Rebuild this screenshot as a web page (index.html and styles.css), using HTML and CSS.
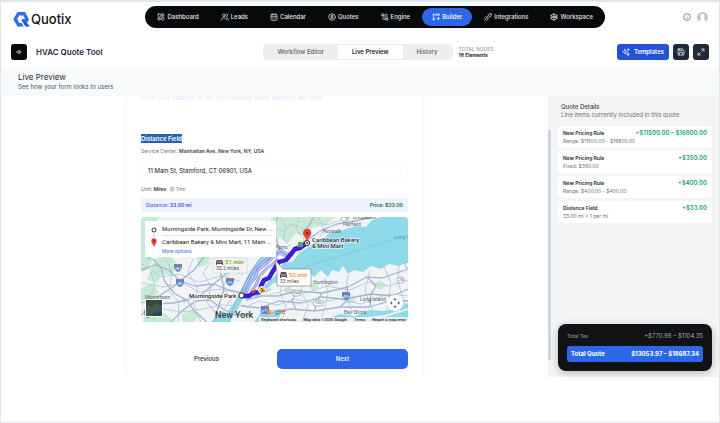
FILE: index.html
```html
<!DOCTYPE html>
<html lang="en">
  <head>
    <meta charset="UTF-8" />
    <meta name="viewport" content="width=device-width, initial-scale=1.0" />
    <title>Quotix - HVAC Quote Tool</title>
    <link rel="stylesheet" href="styles.css">
  </head>
  <body>
    <!-- header -->
    <header class="header">
      <a href="#" class="logo">
        <svg class="logo-mark" viewBox="0 0 17 15">
          <path d="M4.500 0H12L16 7.500L14 11L9.500 7H12.200L10.300 3.500H6.200L4.200 7.300L6.200 11H8.500L10.800 14.500H4.500L0.300 7.300Z" fill="#2f6bed" />
          <path d="M8 7.500H11L17 14.500H12.500Z" fill="#1f55d6" />
        </svg>
        <span>Quotix</span>
      </a>
      <nav class="nav">
        <a href="#" class="nav-item">
          <svg class="icon" viewBox="0 0 24 24"><rect x="3" y="3" width="7" height="9" rx="1" /><rect x="14" y="3" width="7" height="5" rx="1" /><rect x="14" y="12" width="7" height="9" rx="1" /><rect x="3" y="16" width="7" height="5" rx="1" /></svg>
          Dashboard
        </a>
        <a href="#" class="nav-item">
          <svg class="icon" viewBox="0 0 24 24"><circle cx="9" cy="7" r="4" /><path d="M2 21v-2a4 4 0 0 1 4-4h6a4 4 0 0 1 4 4v2M16 3a4 4 0 0 1 0 8M22 21v-2a4 4 0 0 0-3-4" /></svg>
          Leads
        </a>
        <a href="#" class="nav-item">
          <svg class="icon" viewBox="0 0 24 24"><rect x="3" y="4" width="18" height="18" rx="2" /><path d="M8 2v4M16 2v4M3 10h18M8 14h.1M12 14h.1M16 14h.1M8 18h.1M12 18h.1M16 18h.1" /></svg>
          Calendar
        </a>
        <a href="#" class="nav-item">
          <svg class="icon" viewBox="0 0 24 24"><circle cx="12" cy="12" r="10" /><path d="M16 8h-6a2 2 0 0 0 0 4h4a2 2 0 0 1 0 4H8M12 18V6" /></svg>
          Quotes
        </a>
        <a href="#" class="nav-item">
          <svg class="icon" viewBox="0 0 24 24"><path d="M3 3h6v5H3zM6 8v9a3 3 0 0 0 6 0V6a3 3 0 0 1 6 0v9M15 16h6v5h-6z" /></svg>
          Engine
        </a>
        <a href="#" class="nav-item active">
          <svg class="icon" viewBox="0 0 24 24"><circle cx="5" cy="19" r="3" /><circle cx="19" cy="5" r="3" /><path d="M5 16V3M2 6l3-3 3 3M16 5h-5M13 2l-3 3 3 3M19 13v8M15 17h8" /></svg>
          Builder
        </a>
        <a href="#" class="nav-item">
          <svg class="icon" viewBox="0 0 24 24"><path d="M6 21a3 3 0 0 0 4 0l3-3-7-7-3 3a3 3 0 0 0 0 4zM2 22l2-2M8 13l3-3M11 16l3-3M12 6l6 6 3-3a4 4 0 0 0-6-6zM19 5l3-3" /></svg>
          Integrations
        </a>
        <a href="#" class="nav-item">
          <svg class="icon" viewBox="0 0 24 24"><circle cx="12" cy="12" r="9" /><circle cx="12" cy="12" r="3" /><path d="M12 1v8M12 15v8M2 7l7 4M15 13l7 4M2 17l7-4M15 11l7-4" /></svg>
          Workspace
        </a>
      </nav>
      <div class="account">
        <svg class="info" viewBox="0 0 24 24"><circle cx="12" cy="12" r="10" /><path d="M12 11v6M12 7v1" /></svg>
        <svg class="avatar" viewBox="0 0 11 11"><circle cx="5.500" cy="5.500" r="5.500" fill="#c5c5c7" /><path d="M5.500 1.800C3.700 1.800 3.300 3.500 3.500 5C3.600 6.200 4.200 7 4.300 7.500C4.200 8.300 2.200 8.300 1.600 9.400Q5.500 13 9.400 9.400C8.800 8.300 6.800 8.300 6.700 7.500C6.800 7 7.400 6.200 7.500 5C7.700 3.500 7.300 1.800 5.500 1.800Z" fill="#fff" /></svg>
      </div>
    </header>

    <!-- toolbar -->
    <div class="toolbar">
      <div class="tool-title">
        <button class="btn-icon btn-eye" aria-label="Preview">
          <svg class="icon" viewBox="0 0 24 24"><path d="M2 12q10-13 20 0q-10 13-20 0z" /><circle cx="12" cy="12" r="3" /></svg>
        </button>
        <h1>HVAC Quote Tool</h1>
      </div>
      <div class="tool-center">
        <div class="tabs">
          <button class="tab">Workflow Editor</button>
          <button class="tab active">Live Preview</button>
          <button class="tab">History</button>
        </div>
        <div class="nodes">
          <span>TOTAL NODES</span>
          <strong>18 Elements</strong>
        </div>
      </div>
      <div class="tool-actions">
        <button class="btn-templates">
          <svg class="icon" viewBox="0 0 24 24"><path d="M9 4l2 5 5 2-5 2-2 5-2-5-5-2 5-2zM19 2v5M16 5h6M18 15l1 3 3 1-3 1-1 3-1-3-3-1 3-1z" /></svg>
          Templates
        </button>
        <button class="btn-icon" aria-label="Save">
          <svg class="icon" viewBox="0 0 24 24"><path d="M5 3h11l5 5v11a2 2 0 0 1-2 2H5a2 2 0 0 1-2-2V5a2 2 0 0 1 2-2zM7 3v5h8V3M7 21v-8h10v8" /></svg>
        </button>
        <button class="btn-icon" aria-label="Full screen">
          <svg class="icon" viewBox="0 0 24 24"><path d="M14 3h7v7M21 3l-7 7M10 21H3v-7M3 21l7-7" /></svg>
        </button>
      </div>
    </div>

    <div class="subheader">
      <h2>Live Preview</h2>
      <p>See how your form looks to users</p>
    </div>

    <div class="workspace">
      <!-- form preview -->
      <main class="preview">
        <form class="form">
          <p class="hint">Enter your address so we can calculate travel distance and fees.</p>
          <label class="field-label" for="address"><mark>Distance Field</mark></label>
          <p class="meta">Service Center: <b>Manhattan Ave, New York, NY, USA</b></p>
          <input class="address" id="address" type="text" value="11 Main St, Stamford, CT 06901, USA">
          <p class="meta unit">Unit: <b>Miles</b> <span>@ 1/mi</span></p>
          <div class="result">
            <span class="distance">Distance: <b>33.00 mi</b></span>
            <b class="price">Price: $33.00</b>
          </div>

          <div class="map">
            <svg class="map-svg" viewBox="0 0 267 105" preserveAspectRatio="xMidYMid slice">
              <rect width="267" height="105" fill="#f1f4f6" />
              <!-- parks -->
              <g fill="#c5ead5">
                <path d="M0 0H18L10 14L5 30L12 42L7 52L0 56Z" />
                <path d="M14 42L28 38L38 48L30 58L22 56L16 66L6 62Z" />
                <path d="M0 72L10 66L18 75L8 84L0 82Z" />
                <path d="M4 98L16 93L26 98L34 105H2Z" />
                <path d="M40 98L52 92L60 98L52 105H42Z" />
                <path d="M55 38L70 40L66 48L58 50Z" />
                <path d="M130 0H194L184 9L172 10L165 18L154 17L147 26L139 20L131 28Z" />
                <path d="M90 45L98 50L104 44L107 52L101 58L93 56Z" />
                <path d="M168 68L174 65L178 71L171 74Z" />
                <path d="M231 68L239 63L246 68L239 73Z" />
                <path d="M204 80L211 77L215 84L207 87Z" />
                <path d="M142 72L149 68L151 75L145 77Z" />
              </g>
              <!-- water -->
              <g fill="#8fdaea">
                <path d="M135 58L142 46L151 45L158 36L166 31L174 25L182 22L190 15L199 14L208 11L216 9L225 10L231 3L240 0H267V45L258 49L248 47L240 52L230 49L222 55L213 53L207 57L202 49L198 55L191 53L187 60L180 53L173 60L167 54L161 59L155 53L150 60L144 58L139 64L131 67L125 73L120 76L115 78L122 69Z" />
                <path d="M120 40L127 37L119 50L113 60L108 70L103 78L99 88L94 97L88 105H80L88 93L95 83L101 70L108 57Z" />
                <path d="M113 105L119 97L127 90L132 97L140 95L137 105Z" />
                <path d="M150 105L166 100L185 102L199 97L214 99L229 93L244 94L267 86V105Z" />
                <path d="M70 105L76 99L82 94L90 98L85 105Z" />
                <path d="M201 0h8l-3 5zM41 80l4 2-2 5zM7 38l3 3-3 3z" />
              </g>
              <path d="M193 104L218 101L244 98L267 91V93L244 100L218 103Z" fill="#eef3f0" />
              <!-- secondary roads -->
              <g fill="none" stroke="#becbdc" stroke-width="1">
                <path d="M0 46L20 60L38 57L58 65L80 59L99 64" />
                <path d="M24 40L31 55L28 74L38 85L37 105" />
                <path d="M52 42L47 55L57 72L52 86L60 105" />
                <path d="M70 44L62 56L70 70L66 85L75 97" />
                <path d="M0 66L22 70L42 66L58 75L80 72L100 76" />
                <path d="M0 94L18 91L40 95L62 92L80 88L105 89" />
                <path d="M80 45L88 57L82 71L90 82L84 92" />
                <path d="M10 55L14 69L8 82L14 105" />
                <path d="M132 10L142 14L151 7L163 12L173 5L186 8L202 2" />
                <path d="M139 0L145 9L142 22L150 30" />
                <path d="M158 0L155 12L163 22L162 29" />
                <path d="M177 0L183 12L179 20" />
                <path d="M105 90L118 84L137 88L152 82L175 86L197 82L220 87L248 77L267 79" />
                <path d="M129 78L148 72L166 76L186 69L209 73L227 65L247 69L267 63" />
                <path d="M142 60L139 76L145 90L142 103" />
                <path d="M164 58L160 74L167 88L163 100" />
                <path d="M184 60L187 78L181 100" />
                <path d="M207 58L204 78L212 96" />
                <path d="M243 50L250 66L246 92M258 48L257 65L264 88" />
                <path d="M229 53L224 73L231 92" />
              </g>
              <!-- main roads -->
              <g fill="none" stroke="#a5b5d3" stroke-width="1.300" stroke-linejoin="round">
                <path d="M0 53L14 48L28 53L39 64L54 69L72 67L88 73L101 76L115 79L130 72" />
                <path d="M0 86L18 79L32 70L39 64L53 53L63 40" />
                <path d="M12 42L20 51L24 65L34 77L46 83L60 78L74 66L87 55L99 42" />
                <path d="M30 105L42 93L55 84L69 83L82 92L94 98L110 98" />
                <path d="M46 83L54 95L66 105" />
                <path d="M73 105L78 88L83 72L80 57L72 45" />
                <path d="M88 105L94 86L101 73L108 58L117 44L130 33" />
                <path d="M0 98L15 87L32 86L46 83" />
                <path d="M105 83L120 79L137 79L156 74L181 76L207 70L226 60L241 61L267 52" />
                <path d="M101 89L118 91L138 84L160 86L180 80L204 82L230 77L251 79L267 72" />
                <path d="M118 105L129 96L150 92L174 94L199 90L228 90L249 84L267 84" />
                <path d="M130 22L138 31L145 39L154 30L168 22L181 13L196 7L214 4L231 0" />
                <path d="M137 0L132 12L138 31M173 0L166 11L168 22" />
                <path d="M206 69L208 82L199 90M226 60L235 69L230 77L229 90" />
                <path d="M156 74L151 84L155 92M181 76L175 86L174 94" />
              </g>
              <path d="M143 48L158 52L237 27L267 18" fill="none" stroke="#69b6ca" stroke-width=".6" stroke-dasharray="2 1" />
              <!-- shields -->
              <g fill="#5585ca">
                <path d="M33 47h8v4q-1 3-4 4q-3-1-4-4zM35 62h8v4q-1 3-4 4q-3-1-4-4zM85 61h8v4q-1 3-4 4q-3-1-4-4zM120 89h8v4q-1 3-4 4q-3-1-4-4zM201 75h8v4q-1 3-4 4q-3-1-4-4zM3 93h8v4q-1 3-4 4q-3-1-4-4z" />
              </g>
              <g fill="#d6685d">
                <path d="M33 47h8v1h-8zM35 62h8v1h-8zM85 61h8v1h-8zM120 89h8v1h-8zM201 75h8v1h-8zM3 93h8v1h-8z" />
              </g>
              <g fill="#fff" stroke="#8c9298" stroke-width=".7">
                <rect x="151" y="73" width="9" height="6" rx="3" /><rect x="172" y="83" width="10" height="6" rx="3" /><rect x="256" y="60" width="7" height="6" rx="3" /><rect x="200" y="0" width="6" height="4" rx="2" /><circle cx="267" cy="48" r="3" />
              </g>
              <g class="shield-text" fill="#fff"><text x="37" y="53">287</text><text x="39" y="68">80</text><text x="89" y="67">95</text><text x="124" y="95">495</text><text x="205" y="81">495</text></g>
              <g class="shield-text" fill="#555"><text x="155" y="77">25A</text><text x="177" y="87">135</text><text x="260" y="64">25</text></g>
              <!-- alternative routes -->
              <g fill="none" stroke-linejoin="round">
                <path d="M101 78L104 69L108 61L113 53L120 47L126 42L132 37L140 33L146 37L149 37M105 76L109 67L114 61L117 53L124 48L130 42L139 36L144 39M110 75L115 68L118 60L126 51L132 47L137 42" stroke="#6b75dc" stroke-width="2.600" />
                <path d="M101 78L104 69L108 61L113 53L120 47L126 42L132 37L140 33L146 37L149 37M105 76L109 67L114 61L117 53L124 48L130 42L139 36L144 39M110 75L115 68L118 60L126 51L132 47L137 42" stroke="#bdc8ff" stroke-width="1.600" />
                <path d="M101 79L108 79L112 76L119 75L120 69L123 63L128 61L132 54L138 45L145 43L151 36L154 32L159 31L166 26" stroke="#2310a8" stroke-width="4.400" />
                <path d="M101 79L108 79L112 76L119 75L120 69L123 63L128 61L132 54L138 45L145 43L151 36L154 32L159 31L166 26" stroke="#421bea" stroke-width="3" />
              </g>
              <path d="M111 76l4-3" stroke="#e53935" stroke-width="2" />
              <circle cx="121" cy="73" r="3.500" fill="#ffb72c" stroke="#fff" stroke-width="1" />
              <path d="M120 71l2 2-2 2M122 74h2" fill="none" stroke="#633e1e" stroke-width="1" />
              <!-- places -->
              <text class="place" x="182" y="16">Norwalk</text>
              <text class="place" x="202" y="9">Fairfield</text>
              <text class="place" x="212" y="2">Bridgeport</text>
              <text class="place" x="133" y="32">Plains</text>
              <text class="place" x="172" y="67">Huntington</text>
              <text class="place" x="219" y="84">Long Island</text>
              <text class="place" x="203" y="97">Bay Shore</text>
              <text class="place" x="4" y="82">Morristown</text>
              <text class="place sea" x="253" y="22">Long Island Sound</text>
              <text class="wordmark" x="119" y="97"><tspan fill="#4285f4">G</tspan><tspan fill="#ea4335">o</tspan><tspan fill="#fbbc05">o</tspan><tspan fill="#4285f4">g</tspan><tspan fill="#34a853">l</tspan><tspan fill="#ea4335">e</tspan></text>
              <text class="city" x="74" y="101">New York</text>
              <text class="stop" x="48" y="81">Morningside Park</text>
              <text class="stop" x="171" y="25">Caribbean Bakery</text>
              <text class="stop" x="171" y="31">&amp; Mini Mart</text>
              <rect x="98" y="76" width="5" height="5" rx="2" fill="#fff" stroke="#222" stroke-width="1" />
              <rect x="157" y="25" width="5" height="5" fill="#54a565" />
              <circle cx="166" cy="26" r="2.600" fill="#fff" stroke="#222" stroke-width="1" />
              <circle cx="166" cy="26" r="1" fill="#222" />
              <path d="M166 24C165 20 162.300 19 162.300 16A3.900 3.900 0 0 1 170.100 16C170.100 19 167 20 166 24Z" fill="#ea4335" stroke="#b52b24" stroke-width=".4" />
              <circle cx="166.200" cy="16" r="1.300" fill="#8f2018" />
              <!-- travel times -->
              <path d="M72 41h34v15H72z" fill="#f3f3f3" stroke="#c9cccb" stroke-width=".5" />
              <path d="M142 52L134 43L136 54V69H170V52Z" fill="#fff" stroke="#777" stroke-width=".6" />
              <g fill="#555">
                <path d="M75 45l1-2h5l1 2v3h-1v-1h-5v1h-1z" />
                <path d="M139 58l1-3h5l1 3v3h-1v-1h-5v1h-1z" />
                <path d="M76 45h5M140 58h5" stroke="#fff" stroke-width=".6" />
              </g>
              <text class="time green" x="84" y="47">51 min</text>
              <text class="miles" x="75" y="53">35.2 miles</text>
              <text class="time orange" x="148" y="60">52 min</text>
              <text class="miles" x="139" y="66">33 miles</text>
              <!-- satellite toggle -->
              <rect x="4" y="82" width="18" height="18" rx="1" fill="#fff" />
              <rect x="5" y="83" width="16" height="16" fill="#34483a" />
              <path d="M5 87l6 3 4-4 6 3v4l-7 2-4 4H5z" fill="#475a48" />
              <path d="M13 95q4-4 8-4v3l-7 2z" fill="#2d5885" />
            </svg>

            <div class="route-card">
              <svg class="route-pins" viewBox="0 0 6 24"><circle cx="3" cy="4" r="2" fill="#fff" stroke="#333" stroke-width="1" /><path d="M3 8v1M3 10v1" stroke="#999" stroke-width="1" /><path d="M3 21.500C2.500 18.500 .3 17 .3 15A2.700 2.700 0 0 1 5.700 15C5.700 17 3.500 18.500 3 21.500Z" fill="#ea4335" /><circle cx="3" cy="15" r="1" fill="#8f2018" /></svg>
              <div class="route-text">
                <p>Morningside Park, Morningside Dr, New ...</p>
                <p>Caribbean Bakery &amp; Mini Mart, 11 Main ...</p>
                <a href="#">More options</a>
              </div>
            </div>
            <button type="button" class="map-control" aria-label="Map camera controls">
              <svg viewBox="0 0 24 24"><path d="M9 5l3-3 3 3M9 19l3 3 3-3M5 9l-3 3 3 3M19 9l3 3-3 3" /></svg>
            </button>
            <div class="map-credits">
              <a href="#">Keyboard shortcuts</a>
              <span>Map data ©2026 Google</span>
              <a href="#">Terms</a>
              <a href="#">Report a map error</a>
            </div>
          </div>

          <div class="form-buttons">
            <button type="button" class="btn-prev">Previous</button>
            <button type="button" class="btn-next">Next</button>
          </div>
        </form>
      </main>

      <div class="scrollbar"></div>

      <!-- quote details -->
      <aside class="details">
        <div class="details-head">
          <h3>Quote Details</h3>
          <p>Line items currently included in this quote.</p>
        </div>
        <ul class="items">
          <li class="item">
            <div class="item-row"><b>New Pricing Rule</b><b class="amount">+$11500.00 – $16800.00</b></div>
            <p>Range: $11500.00 - $16800.00</p>
          </li>
          <li class="item">
            <div class="item-row"><b>New Pricing Rule</b><b class="amount">+$350.00</b></div>
            <p>Fixed: $350.00</p>
          </li>
          <li class="item">
            <div class="item-row"><b>New Pricing Rule</b><b class="amount">+$400.00</b></div>
            <p>Range: $400.00 - $400.00</p>
          </li>
          <li class="item">
            <div class="item-row"><b>Distance Field</b><b class="amount">+$33.00</b></div>
            <p>33.00 mi × 1 per mi</p>
          </li>
        </ul>
        <div class="total">
          <div class="tax"><span>Total Tax</span><span class="tax-value">+$770.98 – $1104.35</span></div>
          <div class="quote"><span>Total Quote</span><span>$13053.97 – $18687.34</span></div>
        </div>
      </aside>
    </div>
  </body>
</html>
```
FILE: styles.css
```css
* {
  box-sizing: border-box;
}
body {
  margin: 0;
  min-height: 100vh;
  font-family: Inter, "Liberation Sans", sans-serif;
  font-size: 6px;
  line-height: 8px;
  color: #1f2937;
  background-color: #fff;
  border: 1px solid #dde7ef;
  border-top-width: 2px;
}
h1,
h2,
h3,
p,
ul {
  margin: 0;
  padding: 0;
}
a {
  color: inherit;
  text-decoration: none;
}
button {
  border: 0;
  padding: 0;
  font: inherit;
  color: inherit;
  background: none;
  cursor: pointer;
}
.icon {
  width: 8px;
  height: 8px;
  flex: none;
  fill: none;
  stroke: currentColor;
  stroke-width: 2;
  stroke-linecap: round;
  stroke-linejoin: round;
}

/* header */
.header {
  display: grid;
  grid-template-columns: 9fr auto 7fr;
  align-items: center;
  height: 30px;
  padding: 0 11px 0 12px;
}
.logo {
  display: flex;
  align-items: center;
  gap: 1px;
  padding-top: 4px;
  font-size: 13px;
  font-weight: 500;
  line-height: 16px;
  color: #111;
}
.logo-mark {
  width: 17px;
  height: 15px;
}
.nav {
  display: flex;
  gap: 2px;
  padding: 2px;
  border-radius: 11px;
  background-color: #08090b;
}
.nav-item {
  display: flex;
  align-items: center;
  gap: 2px;
  height: 18px;
  padding: 0 10px;
  border-radius: 9px;
  font-weight: 500;
  color: #e5e7eb;
}
.nav-item.active {
  background-color: #2b67e8;
  color: #fff;
}
.account {
  display: flex;
  align-items: center;
  justify-content: flex-end;
  gap: 6px;
}
.info {
  width: 8px;
  height: 8px;
  fill: none;
  stroke: #4b5278;
  stroke-width: 2;
}
.avatar {
  width: 11px;
  height: 11px;
}

/* toolbar */
.toolbar {
  display: flex;
  align-items: center;
  height: 36px;
  padding: 4px 10px 0;
}
.tool-title,
.tool-center,
.tool-actions {
  display: flex;
  align-items: center;
}
.tool-title {
  flex: 7;
  gap: 9px;
}
.tool-title h1 {
  font-size: 8px;
  font-weight: 600;
  line-height: 10px;
  color: #1e2440;
}
.tool-center {
  gap: 6px;
}
.tool-actions {
  flex: 6;
  justify-content: flex-end;
  gap: 4px;
}
.btn-icon {
  display: flex;
  align-items: center;
  justify-content: center;
  width: 16px;
  height: 16px;
  border-radius: 3px;
  color: #fff;
  background-color: #1e293b;
}
.btn-eye {
  background-color: #08090b;
}
.btn-eye .icon {
  width: 6px;
}
.tabs {
  display: flex;
  padding: 1px;
  border-radius: 4px;
  background-color: #eeeeef;
}
.tab {
  height: 14px;
  padding: 0 14px;
  font-weight: 600;
  color: #6b7280;
}
.tab.active {
  color: #1f2937;
  background-color: #fff;
}
.nodes {
  display: flex;
  flex-direction: column;
  font-size: 5px;
  line-height: 6px;
}
.nodes span {
  font-weight: 500;
  color: #94a3b8;
}
.btn-templates {
  display: flex;
  align-items: center;
  gap: 4px;
  height: 16px;
  padding: 0 5px;
  border-radius: 3px;
  font-weight: 600;
  color: #fff;
  background-color: #2350d8;
}
.subheader {
  padding: 4px 17px 5px;
  color: #475569;
  background-color: #f8fafc;
}
.subheader h2 {
  font-size: 8px;
  font-weight: 400;
  line-height: 11px;
  color: #1f2937;
}

/* form */
.workspace {
  display: flex;
  margin-bottom: 45px;
}
.preview {
  flex: 1;
  overflow: hidden;
}
.form {
  max-width: 295px;
  margin: 0 auto;
  padding: 0 14px 8px;
  box-shadow: 0 0 6px rgba(0, 0, 0, 0.07);
}
.hint {
  margin-top: -2px;
  color: #dbeafe;
}
.field-label {
  display: block;
  margin-top: 32px;
  line-height: 9px;
  font-weight: 600;
}
.field-label mark {
  display: inline-block;
  color: #fff;
  background-color: #2463b0;
}
.meta {
  margin-top: 4px;
  font-size: 5px;
  color: #6b7280;
}
.meta b {
  font-weight: 600;
  color: #374151;
}
.address {
  display: block;
  width: 100%;
  height: 19px;
  margin-top: 6px;
  padding: 0 6px;
  border: 1px solid #fafafa;
  border-radius: 4px;
  font: inherit;
  color: #111;
}
.unit {
  margin-top: 5px;
}
.unit span {
  margin-left: 2px;
}
.result {
  display: flex;
  align-items: center;
  justify-content: space-between;
  height: 14px;
  margin: 5px 0;
  padding: 0 5px;
  border-radius: 3px;
  font-size: 5px;
  font-weight: 500;
  background-color: #eef2ff;
}
.result b {
  font-weight: 700;
}
.distance {
  color: #5b54e0;
}
.price {
  color: #12805c;
}
.form-buttons {
  display: grid;
  grid-template-columns: 1fr 1fr;
  gap: 5px;
  margin-top: 27px;
  font-weight: 500;
}
.form-buttons button {
  height: 20px;
  border-radius: 5px;
}
.btn-next {
  color: #fff;
  background-color: #2b67e8;
}

/* map */
.map {
  position: relative;
  height: 105px;
  border-radius: 4px;
  overflow: hidden;
  font-family: Roboto, "Liberation Sans", sans-serif;
}
.map-svg {
  display: block;
  width: 100%;
  height: 100%;
}
.shield-text {
  font-size: 4px;
  text-anchor: middle;
}
.place {
  font-size: 5px;
  fill: #5d6469;
}
.sea {
  fill: #4ba0b5;
}
.city {
  font-size: 9px;
  font-weight: 500;
  fill: #393e42;
}
.stop {
  font-size: 6px;
  font-weight: 500;
  fill: #222;
  stroke: #fff;
  stroke-width: 1px;
  paint-order: stroke;
}
.time {
  font-size: 6px;
  font-weight: 500;
}
.green {
  fill: #5aa61f;
}
.orange {
  fill: #f48a24;
}
.miles {
  font-size: 5px;
  fill: #555;
}
.wordmark {
  font-size: 8px;
  font-weight: 500;
}
.route-card {
  position: absolute;
  top: 4px;
  left: 4px;
  display: flex;
  gap: 5px;
  padding: 2px 3px 3px 6px;
  background-color: #fff;
}
.route-pins {
  width: 6px;
  height: 24px;
  margin-top: 3px;
}
.route-text {
  font-size: 6px;
  color: #222;
}
.route-text p {
  line-height: 12px;
}
.route-text p + p {
  border-top: 1px solid #e3e3e3;
}
.route-text a {
  display: block;
  font-size: 5px;
  line-height: 6px;
  color: #2979d9;
}
.map-control {
  position: absolute;
  right: 5px;
  bottom: 11px;
  display: flex;
  align-items: center;
  justify-content: center;
  width: 16px;
  height: 16px;
  border-radius: 50%;
  background-color: #fff;
}
.map-control svg {
  width: 10px;
  height: 10px;
  fill: none;
  stroke: #666;
  stroke-width: 3;
}
.map-credits {
  position: absolute;
  right: 0;
  bottom: 0;
  display: flex;
  gap: 7px;
  padding: 0 2px;
  font-size: 4px;
  font-weight: 500;
  line-height: 5px;
  color: #222;
  background-color: rgba(245, 245, 245, 0.8);
}

/* quote details */
.scrollbar {
  width: 3px;
  padding: 34px 0 17px;
  background-color: #f1f5f9;
}
.scrollbar::before {
  content: "";
  display: block;
  height: 100%;
  background-color: #cbd5e6;
}
.details {
  display: flex;
  flex-direction: column;
  width: 168px;
  padding: 7px 7px 6px;
  background-color: #f5f5f6;
}
.details-head {
  padding: 0 3px;
  color: #6b7280;
}
.details-head h3 {
  font-size: 6px;
  font-weight: 500;
  line-height: 8px;
  color: #374151;
}
.items {
  display: flex;
  flex-direction: column;
  gap: 3px;
  margin-top: 7px;
  list-style: none;
}
.item {
  padding: 3px 5px;
  border-radius: 3px;
  font-size: 5px;
  color: #6b7280;
  background-color: #fff;
}
.item-row {
  display: flex;
  justify-content: space-between;
}
.item b {
  font-weight: 700;
  color: #374151;
}
.item .amount {
  font-size: 6px;
  font-weight: 600;
  color: #16a36a;
}
.total {
  margin-top: auto;
  padding: 8px 9px 9px;
  border-radius: 8px;
  background-color: #111214;
  box-shadow: 0 2px 8px rgba(0, 0, 0, 0.25);
}
.tax,
.quote {
  display: flex;
  align-items: center;
  justify-content: space-between;
}
.tax {
  font-size: 5px;
  color: #9ca3af;
}
.tax-value {
  font-size: 6px;
}
.quote {
  height: 16px;
  margin-top: 6px;
  padding: 0 4px;
  border-radius: 3px;
  font-weight: 700;
  color: #fff;
  background-color: #2b67e8;
}
```
